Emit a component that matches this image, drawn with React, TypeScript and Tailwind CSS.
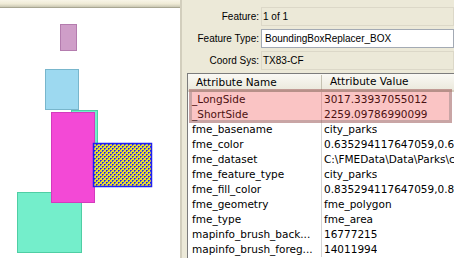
import React from 'react';

const rows: [string, string][] = [
    ['_LongSide', '3017.33937055012'],
    ['_ShortSide', '2259.09786990099'],
    ['fme_basename', 'city_parks'],
    ['fme_color', '0.635294117647059,0.635294117647059,0.635294117647059'],
    ['fme_dataset', 'C:\\FMEData\\Data\\Parks\\city_parks.tab'],
    ['fme_feature_type', 'city_parks'],
    ['fme_fill_color', '0.835294117647059,0.835294117647059,0.835294117647059'],
    ['fme_geometry', 'fme_polygon'],
    ['fme_type', 'fme_area'],
    ['mapinfo_brush_back...', '16777215'],
    ['mapinfo_brush_foreg...', '14011994'],
];

const Canvas = () => (
    <svg width="180" height="250" className="block">
        <defs>
            <pattern id="grid" x="0" y="0" width="4" height="4" patternUnits="userSpaceOnUse">
                <rect x="0" y="0" width="4" height="4" fill="#e6de30" />
                <rect x="0" y="0" width="1" height="1" fill="#1e1ee6" />
                <rect x="2" y="2" width="1" height="1" fill="#1e1ee6" />
                <rect x="1" y="0" width="1" height="1" fill="#5656c8" />
                <rect x="0" y="1" width="1" height="1" fill="#5656c8" />
                <rect x="3" y="2" width="1" height="1" fill="#5656c8" />
                <rect x="2" y="3" width="1" height="1" fill="#5656c8" />
            </pattern>
        </defs>
        <rect x="60.5" y="16.5" width="16" height="26" fill="#cf9ec8" stroke="#b47cae" />
        <rect x="45.5" y="61.5" width="33" height="40" fill="#9dd9f0" stroke="#78b6cc" />
        <rect x="71.5" y="102.5" width="26" height="40" fill="#74eecb" stroke="#4fcea4" />
        <rect x="17.5" y="184.5" width="64" height="60" fill="#74eecb" stroke="#4fcea4" />
        <rect x="51.5" y="104.5" width="43" height="90" fill="#f349d6" stroke="#d43abd" />
        <rect x="93.5" y="135.5" width="58" height="43" fill="url(#grid)" stroke="#2020f0" strokeWidth="1.5" />
    </svg>
);

const Field = ({ label, value, input }: { label: string; value: string; input?: boolean }) => (
    <div className="flex h-[19px] items-center">
        <div className="w-[77px] text-right">{label}</div>
        <div
            className={
                input
                    ? 'ml-[2px] flex h-full flex-1 items-center border border-[#a3aab4] bg-white pl-[3px]'
                    : 'ml-[2px] flex h-full flex-1 items-center border border-[#dcd8c8] pl-[1px]'
            }
        >
            {value}
        </div>
    </div>
);

export default function App() {
    return (
        <div className="flex h-[258px] w-[454px] overflow-hidden bg-[#ece9d8]">
            {/* Map view */}
            <div className="flex w-[182px] flex-col border-r-2 border-[#d2cebd] bg-white">
                <div className="h-[8px] border-b border-[#a8a692] bg-[linear-gradient(#f8f5e8,#efebd6_55%,#cbc8b4)]" />
                <Canvas />
            </div>

            {/* Inspector */}
            <div
                className="flex min-w-0 flex-1 flex-col text-[10px] text-black"
                style={{ fontFamily: '"Liberation Sans", Arial, sans-serif' }}
            >
                <div className="flex flex-col gap-[3px] pt-[7px]">
                    <Field label="Feature:" value="1 of 1" />
                    <Field label="Feature Type:" value="BoundingBoxReplacer_BOX" input />
                    <Field label="Coord Sys:" value="TX83-CF" />
                </div>

                <div
                    className="relative ml-[5px] mt-[3px] flex-1 border-l border-t border-[#7c7c7c] bg-white text-[10.5px]"
                    style={{ fontFamily: '"DejaVu Sans", Verdana, sans-serif' }}
                >
                    <div className="flex h-[18px] items-center border-b-2 border-[#d8d4c4] bg-[linear-gradient(#faf9f4,#ebe9dc)]">
                        <div className="w-[134px] shrink-0 border-r border-[#c5c2b2] pl-[8px] leading-[15px]">Attribute Name</div>
                        <div className="pl-[8px] whitespace-nowrap">Attribute Value</div>
                    </div>
                    {rows.map(([name, value]) => (
                        <div key={name} className="flex h-[15px] items-center">
                            <div className="h-full w-[134px] shrink-0 overflow-hidden whitespace-nowrap border-r border-[#d4d4d4] pl-[4px] leading-[15px]">
                                {name}
                            </div>
                            <div className="overflow-hidden whitespace-nowrap pl-[2px] leading-[15px]">{value}</div>
                        </div>
                    ))}

                    {/* selection highlight */}
                    <div className="absolute left-[1px] top-[15px] h-[34px] w-[263px] border-[3px] border-[rgba(100,100,100,0.32)] bg-[rgba(240,60,60,0.3)]" />
                </div>
            </div>
        </div>
    );
}
